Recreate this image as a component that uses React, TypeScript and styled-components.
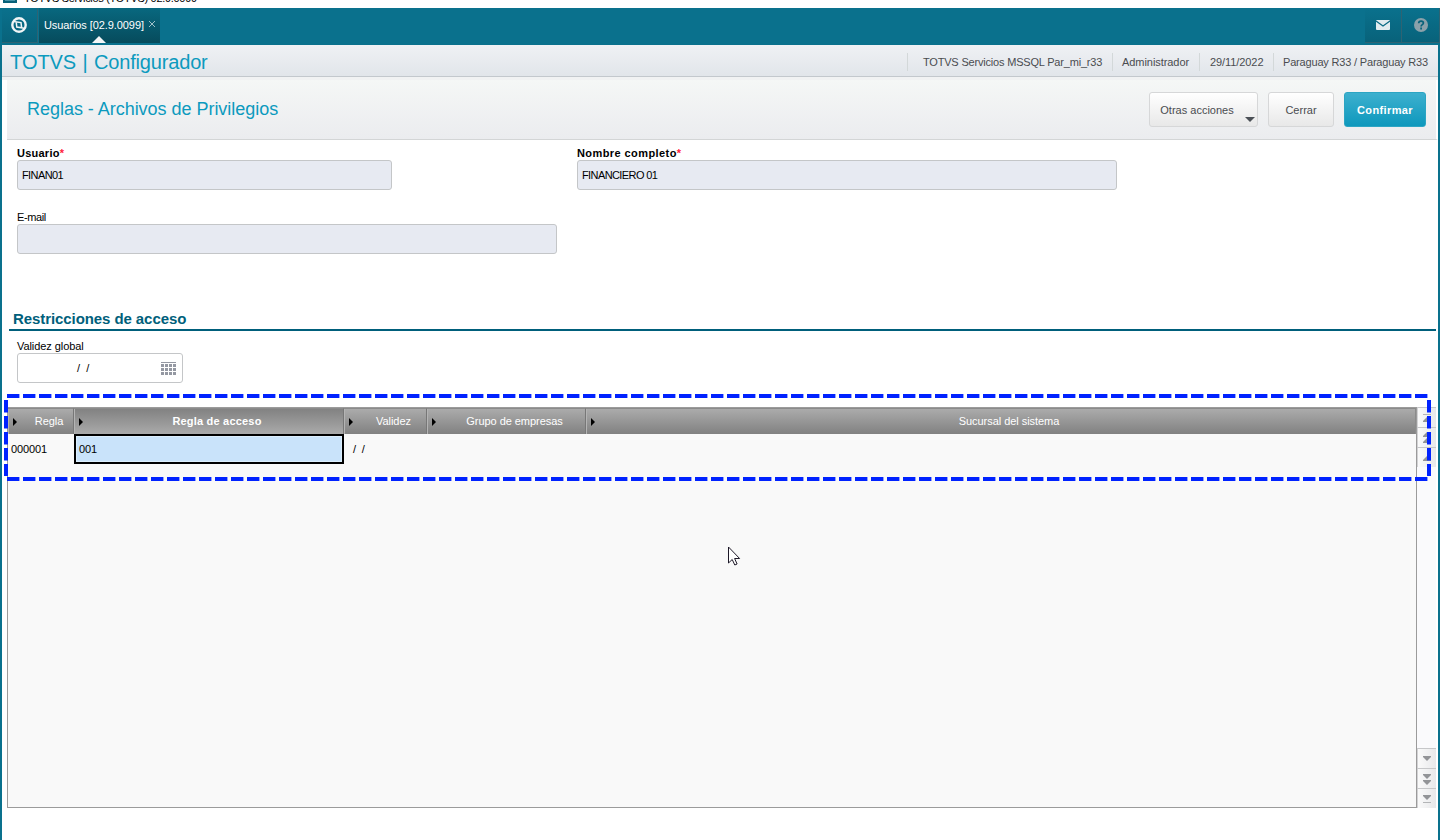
import React from 'react';
import styled, { createGlobalStyle } from 'styled-components';

const Global = createGlobalStyle`
  * { box-sizing: border-box; }
  html, body { margin: 0; height: 100%; overflow: hidden; background: #fff; }
  body { font: 11px/13px "Liberation Sans", Arial, sans-serif; color: #000; }
`;

const Window = styled.div`
  position: relative;
  width: 1440px;
  height: 840px;
  overflow: hidden;
  display: flex;
  flex-direction: column;
`;
const TitleBar = styled.div`
  height: 8px;
  display: flex;
  align-items: flex-end;
  padding-left: 3px;
  overflow: hidden;
  gap: 7px;
`;
const AppGlyph = styled.i`
  width: 14px;
  height: 14px;
  margin-bottom: 5px;
  background: #4593a8;
  border: 2px solid #086179;
`;
const TitleText = styled.span`
  font-size: 11px;
  line-height: 13px;
  letter-spacing: -0.31px;
  margin-bottom: 3px;
  white-space: nowrap;
`;
const Frame = styled.div`
  flex: 1;
  display: flex;
  flex-direction: column;
  border: solid #0a718d;
  border-width: 0 2px;
`;
const TabBar = styled.div`
  height: 37px;
  margin: 0 -2px;
  background: #0a718d;
  display: flex;
  padding: 0 0 2px 2px;
`;
const BarButton = styled.div<{ $w: number }>`
  width: ${p => p.$w}px;
  display: flex;
  align-items: center;
  justify-content: center;
  background: linear-gradient(#0a718d, #08627a);
  border-right: 1px solid #2e6373;
  border-bottom: 1px solid #2e6373;
`;
const HomeButton = styled(BarButton)`padding-right: 1px;`;
const Tab = styled.div`
  position: relative;
  width: 121px;
  margin-left: 1px;
  padding: 0 4px 0 5px;
  display: flex;
  align-items: center;
  justify-content: space-between;
  color: #fff;
  white-space: nowrap;
  background: linear-gradient(#08687f, #064b5c);
`;
const TabLabel = styled.span`letter-spacing: -0.08px;`;
const CloseIcon = styled.svg`margin-bottom: 3px;`;
const Pointer = styled.svg`
  position: absolute;
  left: 53px;
  bottom: 0;
`;
const Spacer = styled.div`flex: 1;`;

const BrandBar = styled.header`
  height: 35px;
  display: flex;
  align-items: flex-start;
  border-bottom: 3px solid #f1f2f3;
  background: linear-gradient(#eff1f4, #e1e5ea);
  box-shadow: inset 0 -1px #c3c8cd;
`;
const Brand = styled.h1`
  margin: 0;
  padding: 5px 0 0 8px;
  flex: 1;
  font-size: 20px;
  line-height: 24px;
  font-weight: 400;
  font-kerning: none;
  letter-spacing: -0.17px;
  word-spacing: 1.2px;
  color: #0c9abe;
  white-space: nowrap;
`;
const Info = styled.span<{ $w: number; $pad: number; $ls?: number }>`
  width: ${p => p.$w}px;
  height: 18px;
  margin-top: 8px;
  padding-left: ${p => p.$pad}px;
  border-left: 1px solid #d3d8d9;
  line-height: 19px;
  letter-spacing: ${p => p.$ls ?? 0}px;
  color: #4a4c50;
  white-space: nowrap;
`;
const ActionBar = styled.div`
  height: 60px;
  margin: 0 0 0 5px;
  padding: 12px 10px 0 20px;
  display: flex;
  gap: 10px;
  background: linear-gradient(#f5f7f6, #ebecef);
  border-bottom: 1px solid #d3d5d6;
  border-right: 2px solid #fff;
`;
const PageTitle = styled.h2`
  margin: 0;
  flex: 1;
  font-size: 18px;
  line-height: 34px;
  font-weight: 400;
  letter-spacing: -0.03px;
  color: #0c9abe;
  white-space: nowrap;
`;
const Button = styled.button<{ $w: number; $primary?: boolean; $menu?: boolean }>`
  position: relative;
  width: ${p => p.$w}px;
  height: 35px;
  padding: ${p => (p.$menu ? '1px 13px 0 0' : '1px 0 0')};
  border-radius: 3px;
  border: 1px solid ${p => (p.$primary ? '#2ca5c3' : '#d6d7d8')};
  background: ${p => (p.$primary ? 'linear-gradient(#3db0ce, #0e98bd)' : 'linear-gradient(#fff, #e8e8e8)')};
  color: ${p => (p.$primary ? '#fff' : '#4a4c50')};
  font: ${p => (p.$primary ? 700 : 400)} 11px "Liberation Sans", Arial, sans-serif;
  letter-spacing: ${p => (p.$primary ? 0.38 : 0)}px;
  white-space: nowrap;
`;
const MenuArrow = styled.svg`
  position: absolute;
  right: 2px;
  bottom: 4px;
`;

const Form = styled.section`
  height: 171px;
  padding: 7px 15px 0;
  display: grid;
  grid-template-columns: 540px 540px;
  column-gap: 20px;
  grid-template-rows: 43px 43px;
  row-gap: 21px;
`;
const Field = styled.label<{ $w: number }>`
  width: ${p => p.$w}px;
  display: flex;
  flex-direction: column;
`;
const Caption = styled.span<{ $bold?: boolean; $ls?: number }>`
  height: 13px;
  font-weight: ${p => (p.$bold ? 700 : 400)};
  letter-spacing: ${p => p.$ls ?? 0}px;
  white-space: nowrap;
`;
const Required = styled.b`color: #ff1c3c;`;
const Box = styled.span<{ $editable?: boolean }>`
  height: 30px;
  border: 1px solid #c4c6c8;
  border-radius: 3px;
  background: ${p => (p.$editable ? '#fff' : '#e7eaf2')};
  display: flex;
  align-items: center;
  justify-content: space-between;
  padding: 0 6px 0 ${p => (p.$editable ? 59 : 4)}px;
  letter-spacing: ${p => (p.$editable ? 0 : -0.6)}px;
  white-space: pre;
`;
const SectionTitle = styled.h3`
  margin: 0 2px 0 7px;
  height: 20px;
  padding-left: 4px;
  border-bottom: 2px solid #005f7b;
  color: #005f7b;
  font-size: 15px;
  line-height: 15px;
  letter-spacing: -0.08px;
`;
const DateRow = styled.div`
  height: 76px;
  padding: 9px 0 0 15px;
`;
const GridArea = styled.div`
  height: 401px;
  margin: 0 0 0 5px;
  display: flex;
`;
const Grid = styled.div`
  width: 1410px;
  background: #f9f9f9;
  border: 1px solid #9b9b9b;
`;
const Row = styled.div`display: flex;`;
const HeadCell = styled.div<{ $w: number; $active?: boolean }>`
  position: relative;
  width: ${p => p.$w}px;
  height: 26px;
  padding: 0 0 0 17px;
  line-height: 24px;
  text-align: center;
  color: #fff;
  font-weight: ${p => (p.$active ? 700 : 400)};
  letter-spacing: ${p => (p.$active ? 0.2 : -0.05)}px;
  background: ${p => (p.$active ? 'linear-gradient(#828282, #aaa)' : 'linear-gradient(#ababab, #818181)')};
  border-top: 1px solid #8b8b8b;
  border-right: 1px solid #777;
  box-shadow: inset 1px 0 #b4b4b4;
  white-space: nowrap;
  &:last-child { border-right-color: #8b8b8b; }
`;
const Marker = styled.svg`
  position: absolute;
  left: 5px;
  top: 9px;
`;
const Cell = styled.div<{ $w: number; $pad: number; $active?: boolean }>`
  width: ${p => p.$w}px;
  height: 30px;
  padding-left: ${p => p.$pad}px;
  line-height: ${p => (p.$active ? 26 : 30)}px;
  letter-spacing: -0.1px;
  white-space: pre;
  ${p => p.$active && 'border: 2px solid #000; background: #c9e3fa; box-shadow: inset 0 0 0 1px #dceefc;'}
`;
const Scroll = styled.div`
  width: 19px;
  display: flex;
  flex-direction: column;
  justify-content: space-between;
  background: #fafafc;
`;
const ScrollButton = styled.div`
  height: 20px;
  display: flex;
  justify-content: center;
  padding-right: 1px;
  align-items: center;
  border-top: 1px solid #c6c7c9;
  border-left: 1px solid #d2d2d4;
  background: linear-gradient(90deg, #fafafa, #e7e8ea);
`;
const Highlight = styled.svg`
  position: absolute;
  left: 0;
  top: 390px;
  pointer-events: none;
`;
const Cursor = styled.svg`
  position: absolute;
  left: 728px;
  top: 546px;
`;

type Glyph = 'one' | 'page' | 'end';
const ScrollGlyph = ({ kind, up }: { kind: Glyph; up?: boolean }) => (
  <svg width="10" height="14" viewBox="0 0 10 14" transform={up ? 'scale(1 -1)' : undefined} fill="#929497">
    {kind === 'one' && <path d="M1 4h8v1L5 9 1 5z" />}
    {kind === 'page' && <path d="M1 2h8v1L5 7 1 3zM1 8h8v1l-4 4-4-4z" />}
    {kind === 'end' && <><path d="M1 3h8v1L5 8 1 4z" /><path d="M1 10h8v1H1z" fill="#b3b5b7" /></>}
  </svg>
);

const columns = [
  { name: 'Regla', w: 66 },
  { name: 'Regla de acceso', w: 270, active: true },
  { name: 'Validez', w: 83 },
  { name: 'Grupo de empresas', w: 159 },
  { name: 'Sucursal del sistema', w: 830 },
];

export default function App() {
  return (
    <Window>
      <Global />
      <TitleBar><AppGlyph /><TitleText>TOTVS Servicios (TOTVS) 02.9.0099</TitleText></TitleBar>
      <Frame>
        <TabBar>
          <HomeButton $w={36}>
            <svg width="16" height="16" viewBox="0 0 16 16" fill="none" stroke="#f1f5f6">
              <circle cx="8" cy="8" r="6.7" strokeWidth="2.4" />
              <path d="M2.500 4.600 10 5.600 10.700 10.800 5.800 10 5.200 5M10.700 10.800 13.500 11.400" strokeWidth="1.5" />
            </svg>
          </HomeButton>
          <Tab>
            <TabLabel>Usuarios [02.9.0099]</TabLabel>
            <CloseIcon width="8" height="8" viewBox="0 0 8 8" stroke="#9fbfc8"><path d="m1 1 6 6M7 1 1 7" /></CloseIcon>
            <Pointer width="14" height="7" viewBox="0 0 14 7"><path d="M0 7 7 0l7 7z" fill="#f4f6f7" /></Pointer>
          </Tab>
          <Spacer />
          <BarButton $w={37}>
            <svg width="14" height="10" viewBox="0 0 14 10">
              <rect width="14" height="10" rx="1" fill="#e1ebee" />
              <path d="m0 1 7 5 7-5" fill="none" stroke="#0a6a84" strokeWidth="1.3" />
            </svg>
          </BarButton>
          <BarButton $w={38}>
            <svg width="14" height="14" viewBox="0 0 14 14">
              <circle cx="7" cy="7" r="7" fill="#8ba1aa" />
              <path d="M4.700 5.300c0-3 4.700-2.800 4.700-.2C9.400 6.700 7.100 6.700 7.100 8.500M7.100 9.600v1.800" fill="none" stroke="#08627a" strokeWidth="1.7" />
            </svg>
          </BarButton>
        </TabBar>
        <BrandBar>
          <Brand>TOTVS | Configurador</Brand>
          <Info $w={205} $pad={15} $ls={-0.19}>TOTVS Servicios MSSQL Par_mi_r33</Info>
          <Info $w={87} $pad={9} $ls={-0.06}>Administrador</Info>
          <Info $w={74} $pad={10} $ls={-0.08}>29/11/2022</Info>
          <Info $w={165} $pad={9} $ls={-0.18}>Paraguay R33 / Paraguay R33</Info>
        </BrandBar>
        <ActionBar>
          <PageTitle>Reglas - Archivos de Privilegios</PageTitle>
          <Button $w={109} $menu>
            Otras acciones
            <MenuArrow width="10" height="5" viewBox="0 0 10 5"><path d="M0 0h10L5 5z" fill="#4b5056" /></MenuArrow>
          </Button>
          <Button $w={66}>Cerrar</Button>
          <Button $w={82} $primary>Confirmar</Button>
        </ActionBar>
        <Form>
          <Field $w={375}><Caption $bold $ls={0.24}>Usuario<Required>*</Required></Caption><Box>FINAN01</Box></Field>
          <Field $w={540}><Caption $bold $ls={0.42}>Nombre completo<Required>*</Required></Caption><Box>FINANCIERO 01</Box></Field>
          <Field $w={540}><Caption $ls={-0.4}>E-mail</Caption><Box /></Field>
        </Form>
        <SectionTitle>Restricciones de acceso</SectionTitle>
        <DateRow>
          <Field $w={166}>
            <Caption $ls={-0.07}>Validez global</Caption>
            <Box $editable>
              {'/  /'}
              <svg width="15" height="13" viewBox="0 0 15 13" fill="#9498a2">
                <path d="M0 0h15v1H0z" />
                {[2, 6, 10].map(y => [0, 4, 8, 12].map(x => <rect key={`${x}-${y}`} x={x} y={y} width="3" height="3" />))}
              </svg>
            </Box>
          </Field>
        </DateRow>
        <GridArea>
          <Grid>
            <Row>
              {columns.map(c => (
                <HeadCell key={c.name} $w={c.w} $active={c.active}>
                  <Marker width="4" height="8" viewBox="0 0 4 8"><path d="M0 0l4 4-4 4z" /></Marker>
                  {c.name}
                </HeadCell>
              ))}
            </Row>
            <Row>
              <Cell $w={66} $pad={3}>000001</Cell>
              <Cell $w={270} $pad={3} $active>001</Cell>
              <Cell $w={83} $pad={9}>{'/  /'}</Cell>
            </Row>
          </Grid>
          <Scroll>
            <div>
              <ScrollButton><ScrollGlyph kind="end" up /></ScrollButton>
              <ScrollButton><ScrollGlyph kind="page" up /></ScrollButton>
              <ScrollButton><ScrollGlyph kind="one" up /></ScrollButton>
            </div>
            <div>
              <ScrollButton><ScrollGlyph kind="one" /></ScrollButton>
              <ScrollButton><ScrollGlyph kind="page" /></ScrollButton>
              <ScrollButton><ScrollGlyph kind="end" /></ScrollButton>
            </div>
          </Scroll>
        </GridArea>
      </Frame>
      <Highlight width="1440" height="96" viewBox="0 390 1440 96" fill="none" stroke="#0022ff" strokeWidth="4" strokeDasharray="12.4 3.6">
        <path d="M7 396H1428M7 479H1428M6 400V476M1429 400V476" />
      </Highlight>
      <Cursor width="13" height="20" viewBox="0 0 13 20">
        <path d="M.5 1v16l3.700-3.500 2.600 5.500 2.300-1-2.500-5.500h5z" fill="#fff" stroke="#1d1928" />
      </Cursor>
    </Window>
  );
}
